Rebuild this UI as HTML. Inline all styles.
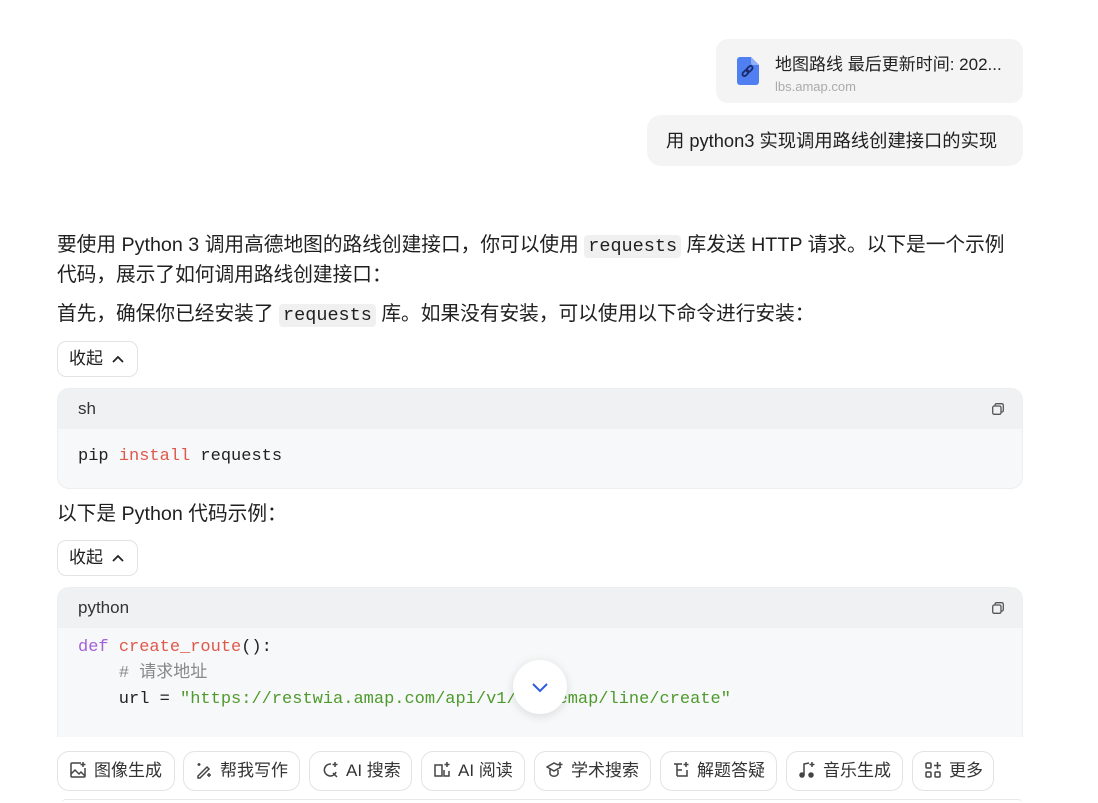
<!DOCTYPE html>
<html><head><meta charset="utf-8"><style>
*{box-sizing:border-box;margin:0;padding:0}
body{width:1098px;height:803px;overflow:hidden;background:#fff;font-family:"Liberation Sans","Noto Sans CJK SC",sans-serif;color:#1f1f1f;position:relative}
.abs{position:absolute}
.card{left:716px;top:39px;width:307px;height:64px;background:#f4f4f5;border-radius:12px}
.bubble{left:647px;top:115px;width:376px;height:51px;background:#f4f4f5;border-radius:14px;font-size:18.3px;line-height:51px;padding-left:19px;white-space:nowrap}
.p{left:57px;font-size:19.7px;line-height:29px;width:960px}
code{font-family:"Liberation Mono",monospace;background:#f0f0f1;border-radius:4px;padding:1px 4px;font-size:18.5px}
.btn{left:57px;width:81px;height:36px;border:1px solid #e3e3e3;border-radius:9px;font-size:17px;line-height:34px;padding-left:11px}
.code{left:57px;width:966px;border-radius:12px;background:#f7f8f9;border:1px solid #eceef0;overflow:hidden}
.hd{height:40px;background:#f0f1f2;font-size:17px;line-height:40px;padding-left:20px;color:#333;position:relative}
.cp{position:absolute;right:18px;top:14px;width:12px;height:12px}
pre{font-family:"Liberation Mono",monospace;font-size:17px;line-height:26px;padding-left:20px;color:#222}
.tb{top:751px;height:40px;border:1px solid #e3e3e3;border-radius:12px;font-size:17px;line-height:38px;padding-left:11px;color:#333;white-space:nowrap}
.tb svg{vertical-align:-3px;margin-right:7px}
</style></head><body>
<div class="abs card">
 <svg class="abs" style="left:21px;top:18px" width="22" height="28" viewBox="0 0 22 28"><path d="M3 0h11l8 8v17a3 3 0 0 1-3 3H3a3 3 0 0 1-3-3V3a3 3 0 0 1 3-3z" fill="#4f7ff0"/><path d="M14 0v6a2 2 0 0 0 2 2h6z" fill="#8fb0f7"/><g stroke="#1b2a6b" stroke-width="1.8" fill="none"><rect x="5" y="14" width="7" height="4" rx="2" transform="rotate(-45 8.5 16)"/><rect x="9" y="10" width="7" height="4" rx="2" transform="rotate(-45 12.5 12)"/></g></svg>
 <div class="abs" style="left:59px;top:11px;font-size:17px;color:#222;white-space:nowrap">地图路线 最后更新时间: 202...</div>
 <div class="abs" style="left:59px;top:40px;font-size:13px;color:#aaa">lbs.amap.com</div>
</div>
<div class="abs bubble">用 python3 实现调用路线创建接口的实现</div>
<div class="abs p" style="top:231px">要使用 Python 3 调用高德地图的路线创建接口，你可以使用 <code>requests</code> 库发送 HTTP 请求。以下是一个示例代码，展示了如何调用路线创建接口：</div>
<div class="abs p" style="top:300px">首先，确保你已经安装了 <code>requests</code> 库。如果没有安装，可以使用以下命令进行安装：</div>
<div class="abs btn" style="top:341px">收起 <svg width="14" height="10" viewBox="0 0 14 10" style="margin-left:3px"><path d="M2 8l5-5 5 5" stroke="#222" stroke-width="1.8" fill="none"/></svg></div>
<div class="abs code" style="top:388px;height:101px">
 <div class="hd">sh<svg class="cp" viewBox="0 0 12 12"><rect x="3" y="0.7" width="8.3" height="8.3" rx="1.5" fill="none" stroke="#555" stroke-width="1.3"/><rect x="0.7" y="3" width="8.3" height="8.3" rx="1.5" fill="#f0f1f2" stroke="#555" stroke-width="1.3"/></svg></div>
 <pre style="padding-top:15px">pip <span style="color:#e0584b">install</span> requests</pre>
</div>
<div class="abs p" style="top:500px">以下是 Python 代码示例：</div>
<div class="abs btn" style="top:540px">收起 <svg width="14" height="10" viewBox="0 0 14 10" style="margin-left:3px"><path d="M2 8l5-5 5 5" stroke="#222" stroke-width="1.8" fill="none"/></svg></div>
<div class="abs code" style="top:587px;height:160px;border-bottom:none;border-radius:12px 12px 0 0">
 <div class="hd">python<svg class="cp" viewBox="0 0 12 12"><rect x="3" y="0.7" width="8.3" height="8.3" rx="1.5" fill="none" stroke="#555" stroke-width="1.3"/><rect x="0.7" y="3" width="8.3" height="8.3" rx="1.5" fill="#f0f1f2" stroke="#555" stroke-width="1.3"/></svg></div>
 <pre style="padding-top:7px"><span style="color:#a361d8">def</span> <span style="color:#e0584b">create_route</span>():
    <span style="color:#888"># 请求地址</span>
    url = <span style="color:#4f9a2c">"https://restwia.amap.com/api/v1/routemap/line/create"</span></pre>
</div>
<div class="abs" style="left:0;top:737px;width:1098px;height:66px;background:#fff"></div>
<div class="abs" style="left:513px;top:660px;width:54px;height:54px;border-radius:50%;background:#fff;box-shadow:0 2px 10px rgba(0,0,0,.12)"><svg class="abs" style="left:18px;top:21px" width="18" height="12" viewBox="0 0 18 12"><path d="M2 3l7 7 7-7" stroke="#2d5be3" stroke-width="2" fill="none"/></svg></div>
<div class="abs tb" style="left:57px;width:118px"><svg width="18" height="18" viewBox="0 0 18 18" fill="none" stroke="#444" stroke-width="1.5"><path d="M12 2H3a1 1 0 0 0-1 1v12a1 1 0 0 0 1 1h12a1 1 0 0 0 1-1V7"/><path d="M2 13l4-4 4 4 2-2 4 4"/><path d="M14 1v5M11.5 3.5h5"/></svg>图像生成</div>
<div class="abs tb" style="left:183px;width:117px"><svg width="18" height="18" viewBox="0 0 18 18" fill="none" stroke="#444" stroke-width="1.5"><path d="M3 15l9-9 2 2-9 9H3z"/><path d="M4 2v3M2.5 3.5h3M14 12v4M12 14h4"/></svg>帮我写作</div>
<div class="abs tb" style="left:309px;width:103px"><svg width="18" height="18" viewBox="0 0 18 18" fill="none" stroke="#444" stroke-width="1.5"><path d="M10 3a6 6 0 1 0 5 8"/><path d="M12 12l4 4M14 1v5M11.5 3.5h5"/></svg>AI 搜索</div>
<div class="abs tb" style="left:421px;width:104px"><svg width="18" height="18" viewBox="0 0 18 18" fill="none" stroke="#444" stroke-width="1.5"><path d="M9 5v10M2 4h7v11H2zM11 9v6h5V10"/><path d="M14 1v5M11.5 3.5h5"/></svg>AI 阅读</div>
<div class="abs tb" style="left:534px;width:117px"><svg width="18" height="18" viewBox="0 0 18 18" fill="none" stroke="#444" stroke-width="1.5"><path d="M12 4L8 2 1 6l7 4 7-4"/><path d="M4 8v5c2 3 6 3 8 0V9"/><path d="M14 1v5M11.5 3.5h5"/></svg>学术搜索</div>
<div class="abs tb" style="left:660px;width:117px"><svg width="18" height="18" viewBox="0 0 18 18" fill="none" stroke="#444" stroke-width="1.5"><path d="M2 3h8M5 3v12M5 9h5M5 15h10V9"/><path d="M14 1v5M11.5 3.5h5"/></svg>解题答疑</div>
<div class="abs tb" style="left:786px;width:117px"><svg width="18" height="18" viewBox="0 0 18 18" fill="none" stroke="#444" stroke-width="1.5"><path d="M6 14V3l5-1"/><circle cx="4" cy="14" r="2" fill="#444"/><circle cx="13" cy="14" r="2" fill="#444"/><path d="M14 1v5M11.5 3.5h5"/></svg>音乐生成</div>
<div class="abs tb" style="left:912px;width:82px"><svg width="18" height="18" viewBox="0 0 18 18" fill="none" stroke="#444" stroke-width="1.5"><rect x="2" y="2" width="5" height="5" rx="1"/><rect x="2" y="11" width="5" height="5" rx="1"/><rect x="11" y="11" width="5" height="5" rx="1"/><path d="M13.5 1v7M10 4.5h7"/></svg>更多</div>
<div class="abs" style="left:62px;top:799px;width:960px;height:4px;border-top:1px solid #e8e8e8;border-radius:10px 10px 0 0"></div>
</body></html>
